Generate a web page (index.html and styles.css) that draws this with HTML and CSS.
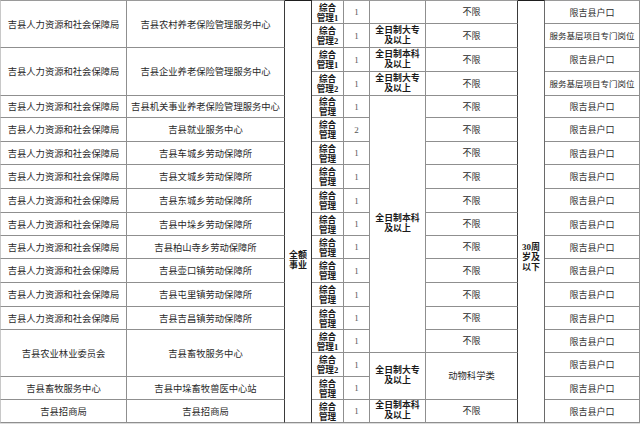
FILE: index.html
```html
<!DOCTYPE html>
<html lang="zh-CN">
<head>
<meta charset="utf-8">
<title>岗位表</title>
<link rel="stylesheet" href="styles.css">
</head>
<body>
<div class="sheet">
  <!-- row 1 -->
  <div class="cell c1 r2 top">吉县人力资源和社会保障局</div>
  <div class="cell c2 r2 top">吉县农村养老保险管理服务中心</div>
  <div class="cell c3 rall top dark-top"><span class="tall">全额<br>事业</span></div>
  <div class="cell c4 top">综合<br>管理1</div>
  <div class="cell c5 top">1</div>
  <div class="cell c6 top"></div>
  <div class="cell c7 top">不限</div>
  <div class="cell c8 rall top dark-top"><span class="tall age">30周<br>岁及<br>以下</span></div>
  <div class="cell c9 top">限吉县户口</div>
  <!-- row 2 -->
  <div class="cell c4">综合<br>管理2</div>
  <div class="cell c5">1</div>
  <div class="cell c6">全日制大专<br>及以上</div>
  <div class="cell c7">不限</div>
  <div class="cell c9 small">服务基层项目专门岗位</div>
  <!-- row 3 -->
  <div class="cell c1 r2">吉县人力资源和社会保障局</div>
  <div class="cell c2 r2">吉县企业养老保险管理服务中心</div>
  <div class="cell c4">综合<br>管理1</div>
  <div class="cell c5">1</div>
  <div class="cell c6">全日制本科<br>及以上</div>
  <div class="cell c7">不限</div>
  <div class="cell c9">限吉县户口</div>
  <!-- row 4 -->
  <div class="cell c4">综合<br>管理2</div>
  <div class="cell c5">1</div>
  <div class="cell c6">全日制大专<br>及以上</div>
  <div class="cell c7">不限</div>
  <div class="cell c9 small">服务基层项目专门岗位</div>
  <!-- row 5 -->
  <div class="cell c1">吉县人力资源和社会保障局</div>
  <div class="cell c2">吉县机关事业养老保险管理服务中心</div>
  <div class="cell c4">综合<br>管理</div>
  <div class="cell c5">1</div>
  <div class="cell c6 r11">全日制本科<br>及以上</div>
  <div class="cell c7">不限</div>
  <div class="cell c9">限吉县户口</div>
  <!-- row 6 -->
  <div class="cell c1">吉县人力资源和社会保障局</div>
  <div class="cell c2">吉县就业服务中心</div>
  <div class="cell c4">综合<br>管理</div>
  <div class="cell c5">2</div>
  <div class="cell c7">不限</div>
  <div class="cell c9">限吉县户口</div>
  <!-- row 7 -->
  <div class="cell c1">吉县人力资源和社会保障局</div>
  <div class="cell c2">吉县车城乡劳动保障所</div>
  <div class="cell c4">综合<br>管理</div>
  <div class="cell c5">1</div>
  <div class="cell c7">不限</div>
  <div class="cell c9">限吉县户口</div>
  <!-- row 8 -->
  <div class="cell c1">吉县人力资源和社会保障局</div>
  <div class="cell c2">吉县文城乡劳动保障所</div>
  <div class="cell c4">综合<br>管理</div>
  <div class="cell c5">1</div>
  <div class="cell c7">不限</div>
  <div class="cell c9">限吉县户口</div>
  <!-- row 9 -->
  <div class="cell c1">吉县人力资源和社会保障局</div>
  <div class="cell c2">吉县东城乡劳动保障所</div>
  <div class="cell c4">综合<br>管理</div>
  <div class="cell c5">1</div>
  <div class="cell c7">不限</div>
  <div class="cell c9">限吉县户口</div>
  <!-- row 10 -->
  <div class="cell c1">吉县人力资源和社会保障局</div>
  <div class="cell c2">吉县中垛乡劳动保障所</div>
  <div class="cell c4">综合<br>管理</div>
  <div class="cell c5">1</div>
  <div class="cell c7">不限</div>
  <div class="cell c9">限吉县户口</div>
  <!-- row 11 -->
  <div class="cell c1">吉县人力资源和社会保障局</div>
  <div class="cell c2">吉县柏山寺乡劳动保障所</div>
  <div class="cell c4">综合<br>管理</div>
  <div class="cell c5">1</div>
  <div class="cell c7">不限</div>
  <div class="cell c9">限吉县户口</div>
  <!-- row 12 -->
  <div class="cell c1">吉县人力资源和社会保障局</div>
  <div class="cell c2">吉县壶口镇劳动保障所</div>
  <div class="cell c4">综合<br>管理</div>
  <div class="cell c5">1</div>
  <div class="cell c7">不限</div>
  <div class="cell c9">限吉县户口</div>
  <!-- row 13 -->
  <div class="cell c1">吉县人力资源和社会保障局</div>
  <div class="cell c2">吉县屯里镇劳动保障所</div>
  <div class="cell c4">综合<br>管理</div>
  <div class="cell c5">1</div>
  <div class="cell c7">不限</div>
  <div class="cell c9">限吉县户口</div>
  <!-- row 14 -->
  <div class="cell c1">吉县人力资源和社会保障局</div>
  <div class="cell c2">吉县吉昌镇劳动保障所</div>
  <div class="cell c4">综合<br>管理</div>
  <div class="cell c5">1</div>
  <div class="cell c7">不限</div>
  <div class="cell c9">限吉县户口</div>
  <!-- row 15 -->
  <div class="cell c1 r2">吉县农业林业委员会</div>
  <div class="cell c2 r2">吉县畜牧服务中心</div>
  <div class="cell c4">综合<br>管理1</div>
  <div class="cell c5">1</div>
  <div class="cell c7">不限</div>
  <div class="cell c9">限吉县户口</div>
  <!-- row 16 -->
  <div class="cell c4">综合<br>管理2</div>
  <div class="cell c5">1</div>
  <div class="cell c6 r2">全日制大专<br>及以上</div>
  <div class="cell c7 r2 major">动物科学类</div>
  <div class="cell c9">限吉县户口</div>
  <!-- row 17 -->
  <div class="cell c1">吉县畜牧服务中心</div>
  <div class="cell c2">吉县中垛畜牧兽医中心站</div>
  <div class="cell c4">综合<br>管理</div>
  <div class="cell c5">1</div>
  <div class="cell c9">限吉县户口</div>
  <!-- row 18 -->
  <div class="cell c1">吉县招商局</div>
  <div class="cell c2">吉县招商局</div>
  <div class="cell c4">综合<br>管理</div>
  <div class="cell c5">1</div>
  <div class="cell c6">全日制本科<br>及以上</div>
  <div class="cell c7">不限</div>
  <div class="cell c9">限吉县户口</div>
</div>
</body>
</html>
```

FILE: styles.css
```css
html, body {
  margin: 0;
  padding: 0;
  background: #ffffff;
}

body {
  width: 640px;
  height: 424px;
  overflow: hidden;
  font-family: "Liberation Serif", "Noto Sans CJK SC", serif;
  color: #2a2a2a;
}

.sheet {
  display: grid;
  grid-template-columns: 127px 158px 27px 32px 26px 56px 92px 27px 95px;
  grid-template-rows: 24px 24px 24px 24px 22px 24px 23px 24px 24px 23px 23px 24px 24px 23px 23px 24px 23px 23px;
  width: 640px;
  border-bottom: 1px solid #dcdcdc;
}

.cell {
  display: flex;
  align-items: center;
  justify-content: center;
  text-align: center;
  border-right: 1px solid #8f8f8f;
  border-bottom: 1px solid #8f8f8f;
  font-size: 9px;
  line-height: 10px;
  white-space: nowrap;
  overflow: hidden;
}

.top { border-top: 1px solid #9a9a9a; }
.dark-top { border-top: 1px solid #1e1e1e; }

.r2 { grid-row: span 2; }
.r11 { grid-row: span 11; }
.rall { grid-row: span 18; }

.c1 {
  grid-column: 1;
  border-left: 1px solid #c8c8c8;
  font-size: 9.3px;
  padding-top: 1px;
}
.c2 {
  grid-column: 2;
  font-size: 9.3px;
  border-right-color: #3a3a3a;
  padding-top: 1px;
}
.c3 {
  grid-column: 3;
  border-right-color: #333333;
  align-items: flex-start;
}
.c4 {
  grid-column: 4;
  font-weight: bold;
  color: #1a1a1a;
  font-size: 8.6px;
  line-height: 10px;
  padding-top: 1px;
}
.c5 {
  grid-column: 5;
  color: #555555;
}
.c6 {
  grid-column: 6;
  font-weight: bold;
  color: #1a1a1a;
  font-size: 8.9px;
  line-height: 9.8px;
}
.c7 {
  grid-column: 7;
  border-right-color: #3a3a3a;
}
.c8 {
  grid-column: 8;
  border-right-color: #6a6a6a;
  align-items: flex-start;
}
.c9 {
  grid-column: 9;
  padding-top: 1px;
}

.small { font-size: 8.5px; }
.major { font-size: 9.3px; }

.tall {
  display: block;
  padding-top: 249px;
  font-weight: bold;
  color: #1a1a1a;
  line-height: 10px;
  font-size: 9px;
}

.tall.age {
  padding-top: 242px;
  line-height: 9.8px;
}
```
